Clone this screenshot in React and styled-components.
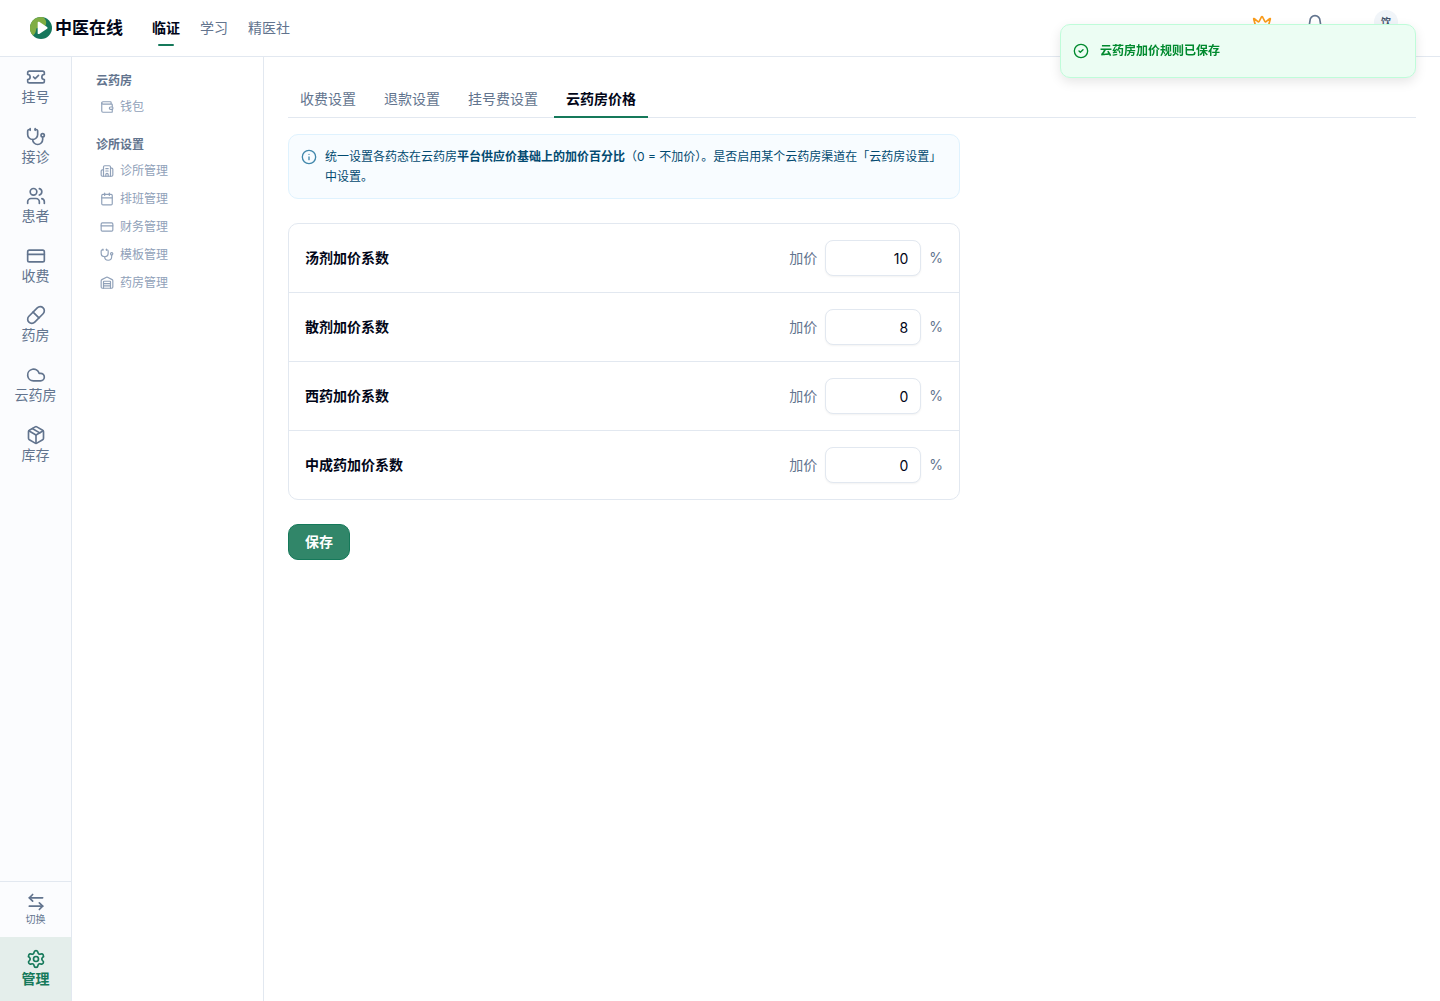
import React, { useState } from 'react';
import styled, { createGlobalStyle, css } from 'styled-components';
import {
  ArrowLeftRight, Bell, Building2, Calendar, CircleCheck, Cloud, CreditCard, Crown, Info,
  Package, Pill, Settings, Stethoscope, TicketCheck, Users, Wallet, Warehouse,
} from 'lucide-react';

const c = {
  text: '#020618',
  muted: '#62748e',
  faint: '#90a1b9',
  line: '#e2e8f0',
  green: '#15795a',
};

const GlobalStyle = createGlobalStyle`
  *, *::before, *::after { box-sizing: border-box; }
  body {
    margin: 0;
    background: #fff;
    color: ${c.text};
    font-family: Inter, "Noto Sans CJK SC", sans-serif;
    font-size: 14px;
    line-height: 20px;
  }
  a { color: inherit; text-decoration: none; }
  button, input { font: inherit; color: inherit; }
  ul { list-style: none; margin: 0; padding: 0; }
`;

const Shell = styled.div`
  display: flex;
  flex-direction: column;
  min-height: 100vh;
`;

const Header = styled.header`
  display: flex;
  align-items: center;
  height: 57px;
  padding: 0 42px 0 30px;
  border-bottom: 1px solid ${c.line};
`;

const Brand = styled.a`
  display: flex;
  align-items: center;
  gap: 3px;
  margin-right: 29px;
  font-size: 17px;
  font-weight: 600;
  line-height: 24px;
`;

const TopNav = styled.nav`
  display: flex;
  gap: 20px;
`;

const TopLink = styled.a`
  display: flex;
  flex-direction: column;
  align-items: center;
  gap: 6px;
  padding-top: 8px;
  color: ${(p) => (p.$active ? c.text : c.muted)};
  font-weight: ${(p) => (p.$active ? 600 : 400)};
  &::after {
    content: '';
    width: 16px;
    height: 2px;
    border-radius: 1px;
    background: ${(p) => (p.$active ? c.green : 'transparent')};
  }
`;

const Tools = styled.div`
  display: flex;
  align-items: center;
  gap: 33px;
  height: 44px;
  margin: 0 0 12px auto;
`;

const ToolButton = styled.button`
  display: flex;
  padding: 4px 0 0;
  border: 0;
  background: none;
  color: ${(p) => (p.$gold ? '#f99c1c' : c.muted)};
`;

const Avatar = styled.button`
  display: grid;
  place-items: center;
  width: 24px;
  height: 24px;
  margin-left: 16px;
  padding: 0;
  border: 0;
  border-radius: 50%;
  background: #f1f5f9;
  color: #45556c;
  font-size: 10px;
  font-weight: 600;
`;

const Body = styled.div`
  display: flex;
  flex: 1;
`;

const Rail = styled.nav`
  display: flex;
  flex-direction: column;
  width: 72px;
  flex-shrink: 0;
  border-right: 1px solid ${c.line};
  background: #fbfcfe;
`;

const RailItem = styled.a`
  display: flex;
  flex-direction: column;
  align-items: center;
  padding: 10px 0;
  color: ${c.muted};
  line-height: 1.4;
  ${(p) => p.$active && css`
    padding: 12px 0;
    background: #e4eeeb;
    color: ${c.green};
    font-weight: 600;
    line-height: 20px;
  `}
`;

const SwitchButton = styled.button`
  display: flex;
  flex-direction: column;
  align-items: center;
  margin-top: auto;
  padding: 10px 0;
  border: 0;
  border-top: 1px solid ${c.line};
  background: none;
  color: ${c.muted};
  font-size: 10px;
  line-height: 15px;
`;

const SideNav = styled.nav`
  display: flex;
  flex-direction: column;
  gap: 14px;
  width: 192px;
  flex-shrink: 0;
  padding: 14px 24px;
  border-right: 1px solid ${c.line};
  font-size: 12px;
`;

const GroupTitle = styled.h2`
  margin: 0 0 2px;
  color: ${c.muted};
  font-size: 12px;
  font-weight: 600;
  line-height: 20px;
`;

const SideLink = styled.a`
  display: flex;
  align-items: center;
  gap: 6px;
  height: 28px;
  padding-left: 4px;
  color: ${c.faint};
`;

const Main = styled.main`
  flex: 1;
  min-width: 0;
  padding: 24px;
`;

const Tabs = styled.div`
  display: flex;
  gap: 4px;
  border-bottom: 1px solid ${c.line};
`;

const Tab = styled.button`
  margin-bottom: -1px;
  padding: 8px 12px 7px;
  border: 0;
  border-bottom: 2px solid ${(p) => (p.$active ? c.green : 'transparent')};
  background: none;
  color: ${(p) => (p.$active ? c.text : c.muted)};
  font-weight: ${(p) => (p.$active ? 600 : 400)};
`;

const Panel = styled.form`
  display: flex;
  flex-direction: column;
  align-items: flex-start;
  gap: 24px;
  max-width: 672px;
  padding-top: 16px;
`;

const Notice = styled.div`
  display: flex;
  align-items: flex-start;
  gap: 8px;
  width: 100%;
  padding: 12px 12px 11px;
  border: 1px solid #dff2fe;
  border-radius: 10px;
  background: #f8fcff;
  color: #024a70;
  font-size: 12px;
  svg { flex-shrink: 0; margin-top: 2px; color: #4187ab; }
  p { margin: 0; }
  strong { font-weight: 600; }
`;

const Card = styled.div`
  width: 100%;
  border: 1px solid ${c.line};
  border-radius: 10px;
`;

const Row = styled.div`
  display: flex;
  align-items: center;
  justify-content: space-between;
  padding: 16px;
  & + & { border-top: 1px solid ${c.line}; }
`;

const RowLabel = styled.label`
  font-weight: 600;
`;

const Field = styled.div`
  display: flex;
  align-items: center;
  gap: 8px;
  color: ${c.muted};
`;

const NumberInput = styled.input`
  width: 96px;
  height: 36px;
  padding: 4px 12px;
  border: 1px solid ${c.line};
  border-radius: 8px;
  background: #fff;
  box-shadow: 0 1px 2px rgba(0, 0, 0, 0.05);
  color: ${c.text};
  text-align: right;
`;

const SaveButton = styled.button`
  height: 36px;
  padding: 0 16px;
  border: 1px solid ${c.green};
  border-radius: 10px;
  background: #318669;
  color: #fff;
  font-weight: 600;
`;

const Toast = styled.div`
  position: fixed;
  top: 24px;
  right: 24px;
  display: flex;
  align-items: center;
  gap: 11px;
  width: 356px;
  padding: 16px 12px;
  border: 1px solid #bffcd9;
  border-radius: 10px;
  background: #ecfdf3;
  box-shadow: 0 4px 12px rgba(0, 0, 0, 0.1);
  color: #008a2e;
  font-size: 12px;
  font-weight: 600;
`;

function Logo() {
  return (
    <svg width="22" height="22" viewBox="0 0 24 24" aria-hidden="true">
      <circle cx="12" cy="12" r="12" fill="#16775c" />
      <path d="M12 0A12 12 0 0 0 3.2 20.2C5.6 18.7 6.6 16.2 6.8 12.5L17 9.2C18.4 6 17.6 2.5 14.6 .3Z" fill="#7fad43" />
      <path d="M8.4 6.2c0-.8.9-1.3 1.6-.9l8.6 5.6c.7.5.7 1.5 0 2L10 18.5c-.7.4-1.6 0-1.6-.9Z" fill="#fff" />
    </svg>
  );
}

const railItems = [
  ['挂号', TicketCheck], ['接诊', Stethoscope], ['患者', Users], ['收费', CreditCard],
  ['药房', Pill], ['云药房', Cloud], ['库存', Package],
];

const sideGroups = [
  { title: '云药房', items: [['钱包', Wallet]] },
  {
    title: '诊所设置',
    items: [
      ['诊所管理', Building2], ['排班管理', Calendar], ['财务管理', CreditCard],
      ['模板管理', Stethoscope], ['药房管理', Warehouse],
    ],
  },
];

const tabs = ['收费设置', '退款设置', '挂号费设置', '云药房价格'];

const initialRates = [
  { id: 'decoction', label: '汤剂加价系数', value: '10' },
  { id: 'powder', label: '散剂加价系数', value: '8' },
  { id: 'western', label: '西药加价系数', value: '0' },
  { id: 'patent', label: '中成药加价系数', value: '0' },
];

export default function App() {
  const [rates, setRates] = useState(initialRates);
  const [tab, setTab] = useState('云药房价格');

  const changeRate = (id, value) =>
    setRates((list) => list.map((r) => (r.id === id ? { ...r, value } : r)));

  return (
    <>
      <GlobalStyle />
      <Shell>
        <Header>
          <Brand href="#"><Logo />中医在线</Brand>
          <TopNav>
            <TopLink href="#" $active>临证</TopLink>
            <TopLink href="#">学习</TopLink>
            <TopLink href="#">精医社</TopLink>
          </TopNav>
          <Tools>
            <ToolButton type="button" aria-label="会员" $gold><Crown size={20} /></ToolButton>
            <ToolButton type="button" aria-label="通知"><Bell size={20} /></ToolButton>
            <Avatar type="button">饮</Avatar>
          </Tools>
        </Header>
        <Body>
          <Rail>
            {railItems.map(([label, Icon]) => (
              <RailItem key={label} href="#"><Icon size={20} />{label}</RailItem>
            ))}
            <SwitchButton type="button"><ArrowLeftRight size={20} />切换</SwitchButton>
            <RailItem href="#" $active><Settings size={20} />管理</RailItem>
          </Rail>
          <SideNav>
            {sideGroups.map((group) => (
              <section key={group.title}>
                <GroupTitle>{group.title}</GroupTitle>
                <ul>
                  {group.items.map(([label, Icon]) => (
                    <li key={label}><SideLink href="#"><Icon size={14} />{label}</SideLink></li>
                  ))}
                </ul>
              </section>
            ))}
          </SideNav>
          <Main>
            <Tabs role="tablist">
              {tabs.map((name) => (
                <Tab
                  key={name}
                  type="button"
                  role="tab"
                  aria-selected={name === tab}
                  $active={name === tab}
                  onClick={() => setTab(name)}
                >
                  {name}
                </Tab>
              ))}
            </Tabs>
            <Panel onSubmit={(e) => e.preventDefault()}>
              <Notice>
                <Info size={16} />
                <p>
                  统一设置各药态在云药房<strong>平台供应价基础上的加价百分比</strong>（0 = 不加价）。是否启用某个云药房渠道在「云药房设置」中设置。
                </p>
              </Notice>
              <Card>
                {rates.map((r) => (
                  <Row key={r.id}>
                    <RowLabel htmlFor={r.id}>{r.label}</RowLabel>
                    <Field>
                      <span>加价</span>
                      <NumberInput
                        id={r.id}
                        inputMode="numeric"
                        value={r.value}
                        onChange={(e) => changeRate(r.id, e.target.value)}
                      />
                      <span>%</span>
                    </Field>
                  </Row>
                ))}
              </Card>
              <SaveButton type="submit">保存</SaveButton>
            </Panel>
          </Main>
        </Body>
      </Shell>
      <Toast role="status"><CircleCheck size={16} />云药房加价规则已保存</Toast>
    </>
  );
}
